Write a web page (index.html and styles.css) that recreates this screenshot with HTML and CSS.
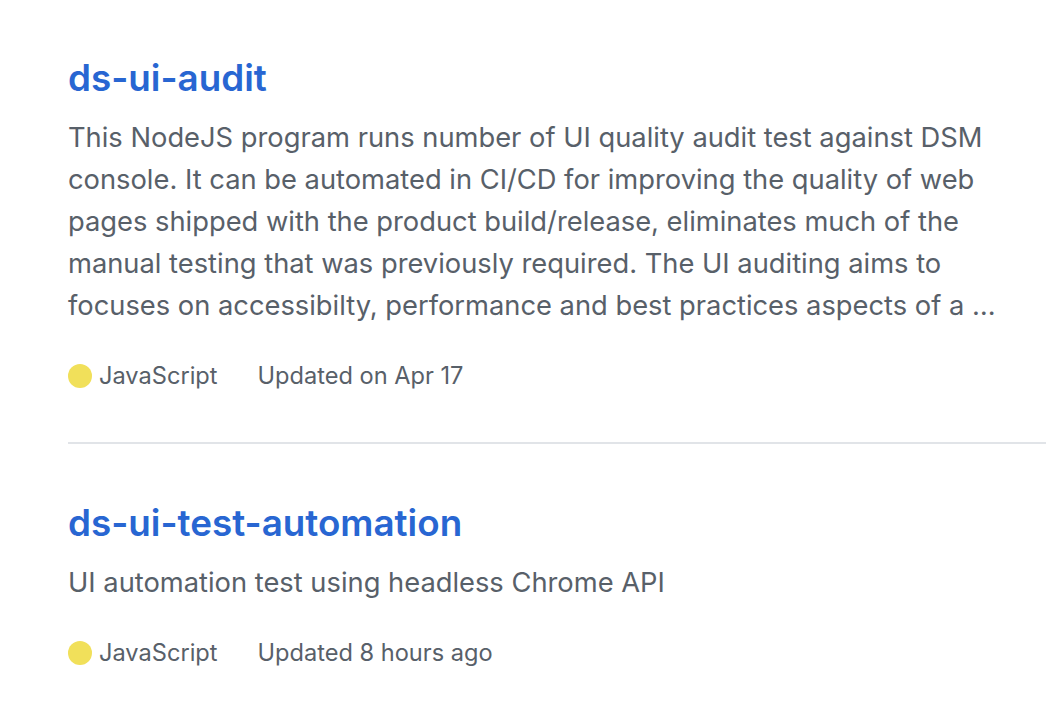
FILE: index.html
```html
<!DOCTYPE html>
<html>
<head>
<meta charset="utf-8">
<link rel="stylesheet" href="styles.css">
</head>
<body>
<ul class="repo-list">
  <li class="repo">
    <h3 class="repo-title"><a href="#">ds-ui-audit</a></h3>
    <p class="repo-desc">This NodeJS program runs number of UI quality audit test against DSM console. It can be automated in CI/CD for improving the quality of web pages shipped with the product build/release, eliminates much of the manual testing that was previously required. The UI auditing aims to focuses on accessibilty, performance and best practices aspects of a …</p>
    <div class="repo-meta">
      <span class="lang"><span class="lang-dot"></span>JavaScript</span>
      <span class="updated">Updated on Apr 17</span>
    </div>
  </li>
  <li class="repo">
    <h3 class="repo-title"><a href="#">ds-ui-test-automation</a></h3>
    <p class="repo-desc">UI automation test using headless Chrome API</p>
    <div class="repo-meta">
      <span class="lang"><span class="lang-dot"></span>JavaScript</span>
      <span class="updated">Updated 8 hours ago</span>
    </div>
  </li>
</ul>
</body>
</html>
```
FILE: styles.css
```css
html, body {
  margin: 0;
  padding: 0;
  background: #fff;
}
body {
  font-family: Inter, "Noto Sans", "Liberation Sans", sans-serif;
  -webkit-font-smoothing: antialiased;
}
.repo-list {
  list-style: none;
  margin: 0;
  padding: 0 0 0 68px;
}
.repo {
  padding: 56px 0 48px;
  border-bottom: 2px solid #e1e4e8;
}
.repo:first-child {
  padding-top: 55px;
}
.repo:last-child {
  border-bottom: none;
}
.repo-title {
  margin: 0;
  font-size: 36.8px;
  line-height: 45px;
  font-weight: 600;
}
.repo-title a {
  color: #2866d2;
  text-decoration: none;
}
.repo-desc {
  margin: 17px 0 0;
  font-size: 27.3px;
  line-height: 42px;
  color: #586069;
  padding-right: 30px;
}
.repo-meta {
  margin-top: 31px;
  display: flex;
  align-items: center;
  font-size: 23.6px;
  line-height: 36px;
  color: #586069;
}
.lang {
  display: flex;
  align-items: center;
  margin-right: 40px;
}
.lang-dot {
  width: 24px;
  height: 24px;
  border-radius: 50%;
  background: #f1e05a;
  margin-right: 7px;
}
```
